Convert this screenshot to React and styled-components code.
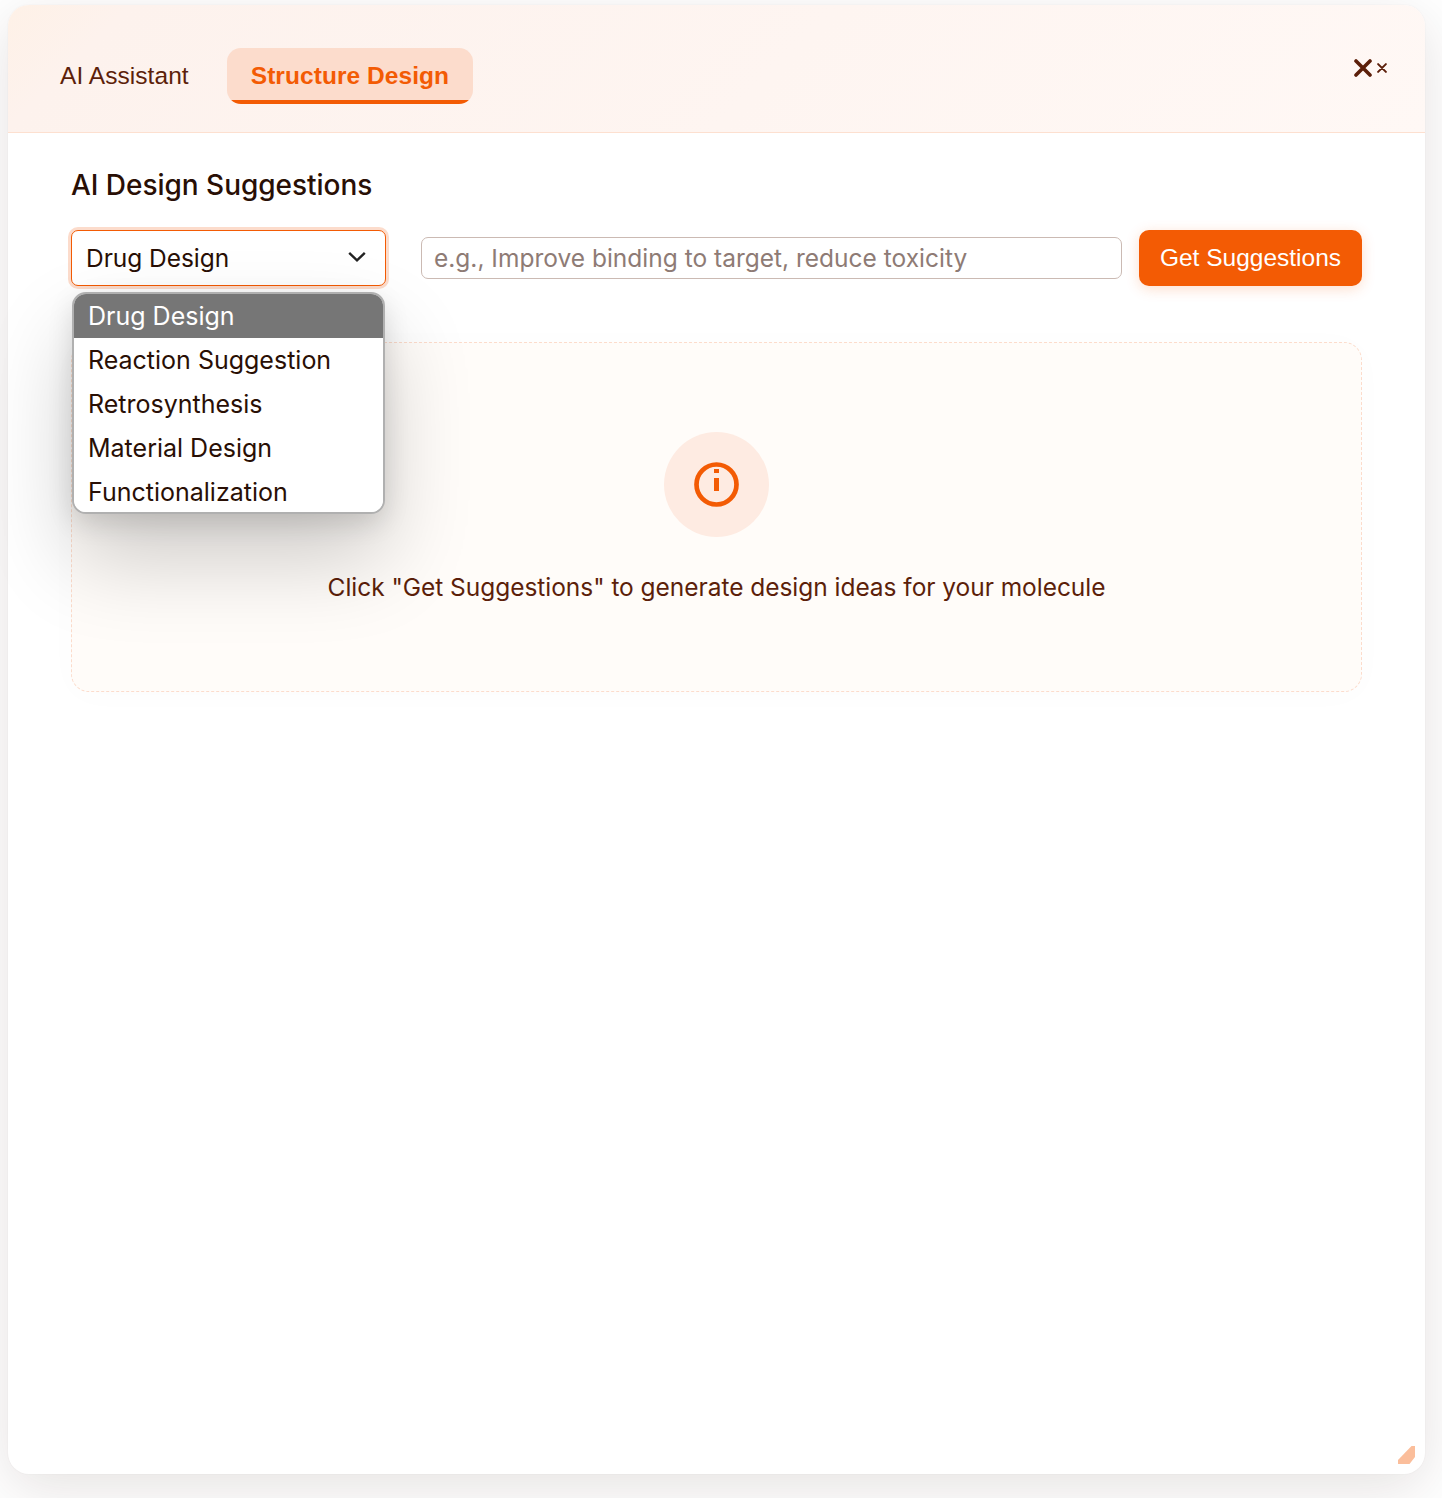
import React from "react";
import styled, { createGlobalStyle, css } from "styled-components";

const GlobalStyle = createGlobalStyle`
  *, *::before, *::after { box-sizing: border-box; }
  body {
    margin: 0;
    background: #fff;
    font-family: Inter, "Noto Sans", sans-serif;
    color: #290f05;
  }
`;

const Page = styled.main`
  height: 1498px;
  padding: 5px 17px 24px 8px;
  overflow: hidden;
`;

const Panel = styled.section`
  display: flex;
  flex-direction: column;
  height: 1469px;
  border-radius: 21px;
  background: #fff;
  box-shadow: 0 14px 56px rgba(41, 15, 5, 0.12), 0 0 2px rgba(41, 15, 5, 0.06);
`;

const Header = styled.header`
  display: flex;
  align-items: flex-start;
  justify-content: space-between;
  height: 128px;
  padding: 43px 38px 0 28px;
  border-bottom: 1px solid #fde0d0;
  border-radius: 21px 21px 0 0;
  background: linear-gradient(135deg, #fef1e7 0%, #fdf2ed 8%, #fff8f5 100%);
`;

const Tabs = styled.nav`
  display: flex;
  gap: 14px;
`;

const Tab = styled.button`
  height: 56px;
  padding: 0 24px 1px;
  border: 0;
  border-radius: 14px;
  background: transparent;
  color: #5c1f0a;
  font: 400 24.5px/53px "Liberation Sans", Arial, sans-serif;
  letter-spacing: 0.06px;
  white-space: nowrap;
  ${({ $active }) =>
    $active &&
    css`
      background: linear-gradient(#f35b04, #f35b04) bottom / 100% 4px no-repeat, #fcdccc;
      color: #f35b04;
      font-weight: 700;
    `}
`;

const Controls = styled.div`
  display: flex;
  align-items: center;
  gap: 5px;
  margin-top: 11px;
  color: #5c1f0a;
`;

const Content = styled.div`
  flex: 1;
  display: flex;
  flex-direction: column;
  padding: 32px 63px 0;
`;

const Title = styled.h2`
  margin: 0;
  font-size: 28px;
  font-weight: 480;
  line-height: 40px;
  letter-spacing: -0.03px;
`;

const Form = styled.div`
  display: flex;
  align-items: center;
  height: 56px;
  margin-top: 25px;
`;

const SelectWrap = styled.div`
  position: relative;
  width: 315px;
  margin-right: 35px;
`;

const Select = styled.button`
  display: flex;
  align-items: center;
  justify-content: space-between;
  width: 100%;
  height: 56px;
  padding: 0 19px 0 14px;
  border: 1px solid #f35b04;
  border-radius: 7px;
  background: #fff;
  box-shadow: 0 0 0 3px #fcdccc;
  color: #290f05;
  font: 370 24.5px/36px Inter, "Noto Sans", sans-serif;
  letter-spacing: -0.05px;
`;

const Menu = styled.ul`
  position: absolute;
  z-index: 2;
  top: 62px;
  left: 1px;
  width: 313px;
  height: 222px;
  margin: 0;
  padding: 0;
  overflow: hidden;
  list-style: none;
  border: 2px solid #b0b0b0;
  border-radius: 14px;
  background: #fff;
  box-shadow: 0 44px 88px rgba(0, 0, 0, 0.2), 0 9px 26px rgba(0, 0, 0, 0.12);
`;

const Option = styled.li`
  height: 44px;
  padding-left: 14px;
  background: ${({ $selected }) => ($selected ? "#767676" : "#fff")};
  color: ${({ $selected }) => ($selected ? "#fff" : "#290f05")};
  font-size: 25px;
  font-weight: 370;
  line-height: 44px;
  white-space: nowrap;
`;

const Input = styled.input`
  width: 701px;
  height: 42px;
  margin-right: 17px;
  padding: 0 12px;
  border: 1px solid #cbbab3;
  border-radius: 7px;
  background: #fff;
  font: 370 24.5px/36px Inter, "Noto Sans", sans-serif;
  &::placeholder {
    color: #8e7b75;
    opacity: 1;
  }
`;

const Submit = styled.button`
  flex: 1;
  height: 56px;
  padding: 0 0 1px;
  border: 0;
  border-radius: 10px;
  background: #f35b04;
  box-shadow: 0 3px 14px rgba(243, 91, 4, 0.2);
  color: #fff;
  font: 400 24.5px/53px "Liberation Sans", Arial, sans-serif;
  white-space: nowrap;
`;

const EmptyState = styled.div`
  display: flex;
  flex-direction: column;
  align-items: center;
  height: 350px;
  margin-top: 56px;
  padding-top: 89px;
  border: 1px dashed #fcdccc;
  border-radius: 18px;
  background: #fffcf9;
  box-shadow: 0 3px 35px rgba(0, 0, 0, 0.016);
`;

const Badge = styled.div`
  display: grid;
  place-items: center;
  width: 105px;
  height: 105px;
  border-radius: 50%;
  background: #feebe2;
`;

const Hint = styled.p`
  margin: 30px 0 0;
  color: #5c1f0a;
  font-size: 24.5px;
  font-weight: 370;
  line-height: 40px;
  letter-spacing: -0.04px;
  white-space: nowrap;
`;

const ResizeRow = styled.footer`
  display: flex;
  justify-content: flex-end;
  padding: 0 10px 10px 0;
`;

const Cross = ({ size, weight }) => (
  <svg width={size} height={size} viewBox="0 0 18 18" fill="none" stroke="currentColor" strokeWidth={weight} strokeLinecap="round">
    <path d="M2 2 16 16M16 2 2 16" />
  </svg>
);

const Chevron = () => (
  <svg width="18" height="12" viewBox="0 0 18 12" fill="none" stroke="#222" strokeWidth="2.4">
    <path d="M1.2 .9 9 8.4l7.8-7.5" />
  </svg>
);

const InfoIcon = () => (
  <svg width="45" height="45" viewBox="0 0 45 45" fill="#f35b04">
    <circle cx="22.5" cy="22.5" r="20" fill="none" stroke="#f35b04" strokeWidth="4.7" />
    <path d="M20 7h5v4h-5zM20 16h5v13h-5z" />
  </svg>
);

const options = ["Drug Design", "Reaction Suggestion", "Retrosynthesis", "Material Design", "Functionalization"];

export default function App() {
  return (
    <Page>
      <GlobalStyle />
      <Panel>
        <Header>
          <Tabs>
            <Tab>AI Assistant</Tab>
            <Tab $active>Structure Design</Tab>
          </Tabs>
          <Controls>
            <Cross size={18} weight={3.6} />
            <Cross size={10} weight={3.6} />
          </Controls>
        </Header>
        <Content>
          <Title>AI Design Suggestions</Title>
          <Form>
            <SelectWrap>
              <Select>
                <span>Drug Design</span>
                <Chevron />
              </Select>
              <Menu>
                {options.map((name, i) => (
                  <Option key={name} $selected={i === 0}>{name}</Option>
                ))}
              </Menu>
            </SelectWrap>
            <Input placeholder="e.g., Improve binding to target, reduce toxicity" />
            <Submit>Get Suggestions</Submit>
          </Form>
          <EmptyState>
            <Badge><InfoIcon /></Badge>
            <Hint>Click "Get Suggestions" to generate design ideas for your molecule</Hint>
          </EmptyState>
        </Content>
        <ResizeRow>
          <svg width="17" height="18" viewBox="0 0 17 18" fill="#fbbe9b">
            <path d="M13.5 0H17v11l-5.5 7H0v-4z" />
          </svg>
        </ResizeRow>
      </Panel>
    </Page>
  );
}
